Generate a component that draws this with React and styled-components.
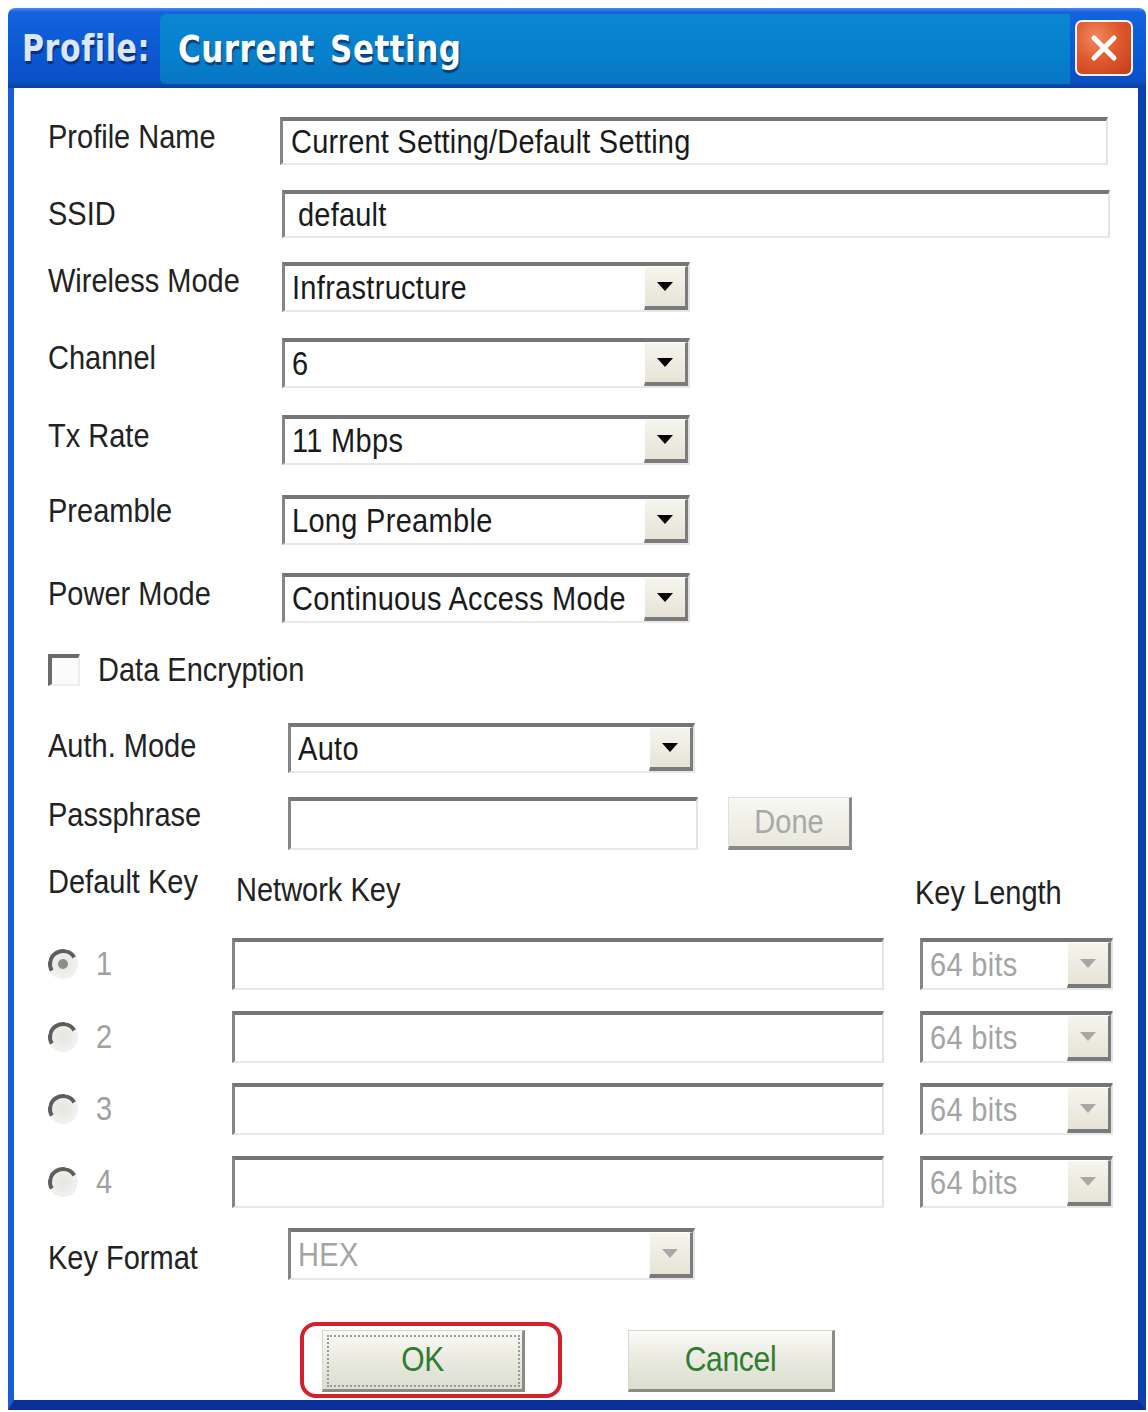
import React from "react";
import styled, { createGlobalStyle, css } from "styled-components";

const Global = createGlobalStyle`
  html, body { margin: 0; padding: 0; background: #ffffff; }
  body { font-family: "Liberation Sans", Arial, sans-serif; color: #1e1e1e; }
  * { box-sizing: border-box; }
`;

const Window = styled.div`
  margin: 8px 0 0 8px;
  width: 1138px;
  display: flex;
  flex-direction: column;
`;

const TitleBar = styled.div`
  height: 80px;
  display: flex;
  align-items: stretch;
  border-radius: 7px 7px 0 0;
  background: linear-gradient(#4a8cf0 0px, #1463dc 4px, #0b5ad4 50%, #0a50c6 92%, #08409e 100%);
  overflow: hidden;
`;

const TitleText = styled.span`
  display: inline-block;
  transform: scaleY(1.22);
`;

const TitleLead = styled.div`
  width: 152px;
  display: flex;
  align-items: center;
  padding-left: 14px;
  font-family: "DejaVu Sans", Verdana, sans-serif;
  font-weight: bold;
  font-size: 30px;
  letter-spacing: 0.6px;
  color: #dbe6f8;
  text-shadow: 1px 2px 1px #0a2f80;
`;

const TitleMain = styled.div`
  flex: 1;
  display: flex;
  align-items: center;
  padding-left: 18px;
  margin: 6px 0 4px;
  background: linear-gradient(#0b86d2, #0780cc 60%, #0676c2);
  border-radius: 6px 0 0 6px;
  font-family: "DejaVu Sans", Verdana, sans-serif;
  font-weight: bold;
  font-size: 31px;
  letter-spacing: 0.5px;
  word-spacing: 4px;
  color: #ffffff;
  text-shadow: 1px 2px 1px #07407a;
`;

const CloseArea = styled.div`
  width: 76px;
  display: flex;
  align-items: center;
  justify-content: flex-start;
  padding-left: 5px;
`;

const CloseButton = styled.div`
  width: 58px;
  height: 56px;
  border-radius: 7px;
  border: 2px solid #f4f4f4;
  background: radial-gradient(circle at 35% 30%, #f08a60 0%, #e05a30 45%, #c43c18 100%);
  display: flex;
  align-items: center;
  justify-content: center;
`;

const Body = styled.div`
  background: #ffffff;
  border-left: 6px solid #1a5bd8;
  border-right: 8px solid #0c40b0;
  border-bottom: 10px solid #0a2f98;
  padding: 29px 0 2px 34px;
  display: flex;
  flex-direction: column;
`;

const Row = styled.div`
  display: flex;
  align-items: center;
  height: ${(p) => p.$h}px;
  margin-top: ${(p) => p.$mt || 0}px;
`;

const Text = styled.span`
  display: inline-block;
  transform: scaleY(1.14);
`;

const Label = styled.div`
  width: ${(p) => p.$w}px;
  flex: none;
  font-size: 29px;
  letter-spacing: 0px;
  color: #222;
  white-space: nowrap;
  position: relative;
  top: ${(p) => p.$dy || 0}px;
`;

const sunken = css`
  background: #ffffff;
  border-top: 4px solid #757575;
  border-left: 3px solid #858585;
  border-right: 2px solid #e4e4e4;
  border-bottom: 2px solid #e8e8e8;
`;

const TextField = styled.div`
  ${sunken};
  width: ${(p) => p.$w}px;
  height: 100%;
  flex: none;
  display: flex;
  align-items: center;
  padding-left: ${(p) => p.$pl || 8}px;
  font-size: 29px;
  letter-spacing: 0.2px;
  color: #1a1a1a;
  white-space: nowrap;
`;

const SelectBox = styled.div`
  ${sunken};
  width: ${(p) => p.$w}px;
  height: 100%;
  flex: none;
  display: flex;
  align-items: center;
  justify-content: space-between;
  padding-left: 7px;
  font-size: 29px;
  letter-spacing: 0.3px;
  color: ${(p) => (p.$disabled ? "#a4a4a4" : "#1a1a1a")};
  white-space: nowrap;
  overflow: hidden;
`;

const DropButton = styled.div`
  width: 44px;
  height: 100%;
  flex: none;
  display: flex;
  align-items: center;
  justify-content: center;
  background: linear-gradient(#f6f5ee, #e6e4d6);
  border-top: 1px solid #ffffff;
  border-left: 1px solid #ffffff;
  border-right: 3px solid #7c7c7c;
  border-bottom: 4px solid #7a7a7a;
`;

const Arrow = styled.div`
  width: 0;
  height: 0;
  border-left: 8px solid transparent;
  border-right: 8px solid transparent;
  border-top: 9px solid ${(p) => (p.$disabled ? "#a8a8a8" : "#000000")};
`;

const Check = styled.div`
  width: 32px;
  height: 32px;
  flex: none;
  background: #fbfbfb;
  border-top: 4px solid #6a6a6a;
  border-left: 4px solid #6a6a6a;
  border-right: 2px solid #eeeeee;
  border-bottom: 2px solid #eeeeee;
`;

const CheckText = styled.div`
  margin-left: 18px;
  font-size: 29px;
  color: #222;
`;

const SmallButton = styled.div`
  margin-left: ${(p) => p.$ml}px;
  width: 124px;
  height: 53px;
  display: flex;
  align-items: center;
  justify-content: center;
  background: linear-gradient(#f8f8f2, #e8e8de);
  border-top: 1px solid #e0e0e0;
  border-left: 1px solid #e0e0e0;
  border-right: 3px solid #8a8a8a;
  border-bottom: 4px solid #8a8a8a;
  font-size: 29px;
  color: #a8a8a8;
`;

const HeaderRow = styled.div`
  display: flex;
  align-items: flex-start;
  height: 46px;
  margin-top: 16px;
`;

const HeaderText = styled.div`
  width: ${(p) => p.$w || "auto"}px;
  flex: none;
  font-size: 29px;
  color: #222;
  margin-top: ${(p) => p.$dy}px;
  white-space: nowrap;
`;

const RadioCell = styled.div`
  width: 184px;
  flex: none;
  display: flex;
  align-items: center;
`;

const Radio = styled.div`
  width: 30px;
  height: 30px;
  border-radius: 50%;
  flex: none;
  border: 4px solid #f0f0f0;
  border-top-color: #5e5e5e;
  border-left-color: #5e5e5e;
  transform: rotate(15deg);
  background: radial-gradient(circle, #e6e6e0 0%, #f2f2ee 100%);
  display: flex;
  align-items: center;
  justify-content: center;
`;

const RadioDot = styled.div`
  width: 10px;
  height: 10px;
  border-radius: 50%;
  background: #8c8c8c;
`;

const RadioNum = styled.div`
  margin-left: 18px;
  font-size: 29px;
  color: #a0a0a0;
`;

const Gap = styled.div`
  width: ${(p) => p.$w}px;
  flex: none;
`;

const ButtonRow = styled.div`
  display: flex;
  align-items: flex-start;
  margin-top: 42px;
  height: 76px;
`;

const Highlight = styled.div`
  margin-left: 252px;
  width: 262px;
  height: 76px;
  border: 4px solid #d4202c;
  border-radius: 16px;
  padding: 4px 33px 2px 18px;
  display: flex;
`;

const DialogButton = styled.div`
  width: ${(p) => p.$w}px;
  height: 62px;
  margin-left: ${(p) => p.$ml || 0}px;
  margin-top: ${(p) => p.$mt || 0}px;
  display: flex;
  align-items: center;
  justify-content: center;
  background: linear-gradient(#fbfbf7 0%, #ebebe2 45%, #dcdecf 100%);
  border-top: 1px solid #d8d8cc;
  border-left: 1px solid #d8d8cc;
  border-right: 3px solid #8c8c84;
  border-bottom: 3px solid #8c8c84;
  font-size: 30px;
  letter-spacing: -0.3px;
  color: #2f7d2f;
  ${(p) =>
    p.$focus &&
    css`
      outline: 2px dotted #9a9a9a;
      outline-offset: -7px;
    `}
`;

const Select = ({ w, value, disabled }) => (
  <SelectBox $w={w} $disabled={disabled}>
    <Text>{value}</Text>
    <DropButton>
      <Arrow $disabled={disabled} />
    </DropButton>
  </SelectBox>
);

const selectRows = [
  { label: "Wireless Mode", value: "Infrastructure", mt: 24, dy: -6 },
  { label: "Channel", value: "6", mt: 26, dy: -5 },
  { label: "Tx Rate", value: "11 Mbps", mt: 27, dy: -4 },
  { label: "Preamble", value: "Long Preamble", mt: 30, dy: -9 },
  { label: "Power Mode", value: "Continuous Access Mode", mt: 28, dy: -4 },
];

const keyRows = [
  { n: 1, mt: 26, on: true },
  { n: 2, mt: 21 },
  { n: 3, mt: 20 },
  { n: 4, mt: 21 },
];

export default function App() {
  return (
    <>
      <Global />
      <Window>
        <TitleBar>
          <TitleLead>
            <TitleText>Profile:</TitleText>
          </TitleLead>
          <TitleMain>
            <TitleText>Current Setting</TitleText>
          </TitleMain>
          <CloseArea>
            <CloseButton>
              <svg width="30" height="30" viewBox="0 0 30 30">
                <path d="M5 5 L25 25 M25 5 L5 25" stroke="#ffffff" strokeWidth="5" strokeLinecap="round" />
              </svg>
            </CloseButton>
          </CloseArea>
        </TitleBar>
        <Body>
          <Row $h={48}>
            <Label $w={232} $dy={-4}><Text>Profile Name</Text></Label>
            <TextField $w={828}><Text>Current Setting/Default Setting</Text></TextField>
          </Row>
          <Row $h={48} $mt={25}>
            <Label $w={234}><Text>SSID</Text></Label>
            <TextField $w={828} $pl={13}><Text>default</Text></TextField>
          </Row>
          {selectRows.map((r) => (
            <Row key={r.label} $h={50} $mt={r.mt}>
              <Label $w={234} $dy={r.dy}><Text>{r.label}</Text></Label>
              <Select w={408} value={r.value} />
            </Row>
          ))}
          <Row $h={32} $mt={31}>
            <Check />
            <CheckText><Text>Data Encryption</Text></CheckText>
          </Row>
          <Row $h={50} $mt={37}>
            <Label $w={240} $dy={-2}><Text>Auth. Mode</Text></Label>
            <Select w={407} value="Auto" />
          </Row>
          <Row $h={53} $mt={24}>
            <Label $w={240} $dy={-8}><Text>Passphrase</Text></Label>
            <TextField $w={410} />
            <SmallButton $ml={30}><Text>Done</Text></SmallButton>
          </Row>
          <HeaderRow>
            <HeaderText $w={188} $dy={0}><Text>Default Key</Text></HeaderText>
            <HeaderText $w={679} $dy={8}><Text>Network Key</Text></HeaderText>
            <HeaderText $dy={11}><Text>Key Length</Text></HeaderText>
          </HeaderRow>
          {keyRows.map((k) => (
            <Row key={k.n} $h={52} $mt={k.mt}>
              <RadioCell>
                <Radio>{k.on && <RadioDot />}</Radio>
                <RadioNum><Text>{k.n}</Text></RadioNum>
              </RadioCell>
              <TextField $w={652} />
              <Gap $w={36} />
              <Select w={193} value="64 bits" disabled />
            </Row>
          ))}
          <Row $h={52} $mt={20}>
            <Label $w={240} $dy={4}><Text>Key Format</Text></Label>
            <Select w={407} value="HEX" disabled />
          </Row>
          <ButtonRow>
            <Highlight>
              <DialogButton $w={203} $focus><Text>OK</Text></DialogButton>
            </Highlight>
            <DialogButton $w={207} $ml={66} $mt={8}><Text>Cancel</Text></DialogButton>
          </ButtonRow>
        </Body>
      </Window>
    </>
  );
}
